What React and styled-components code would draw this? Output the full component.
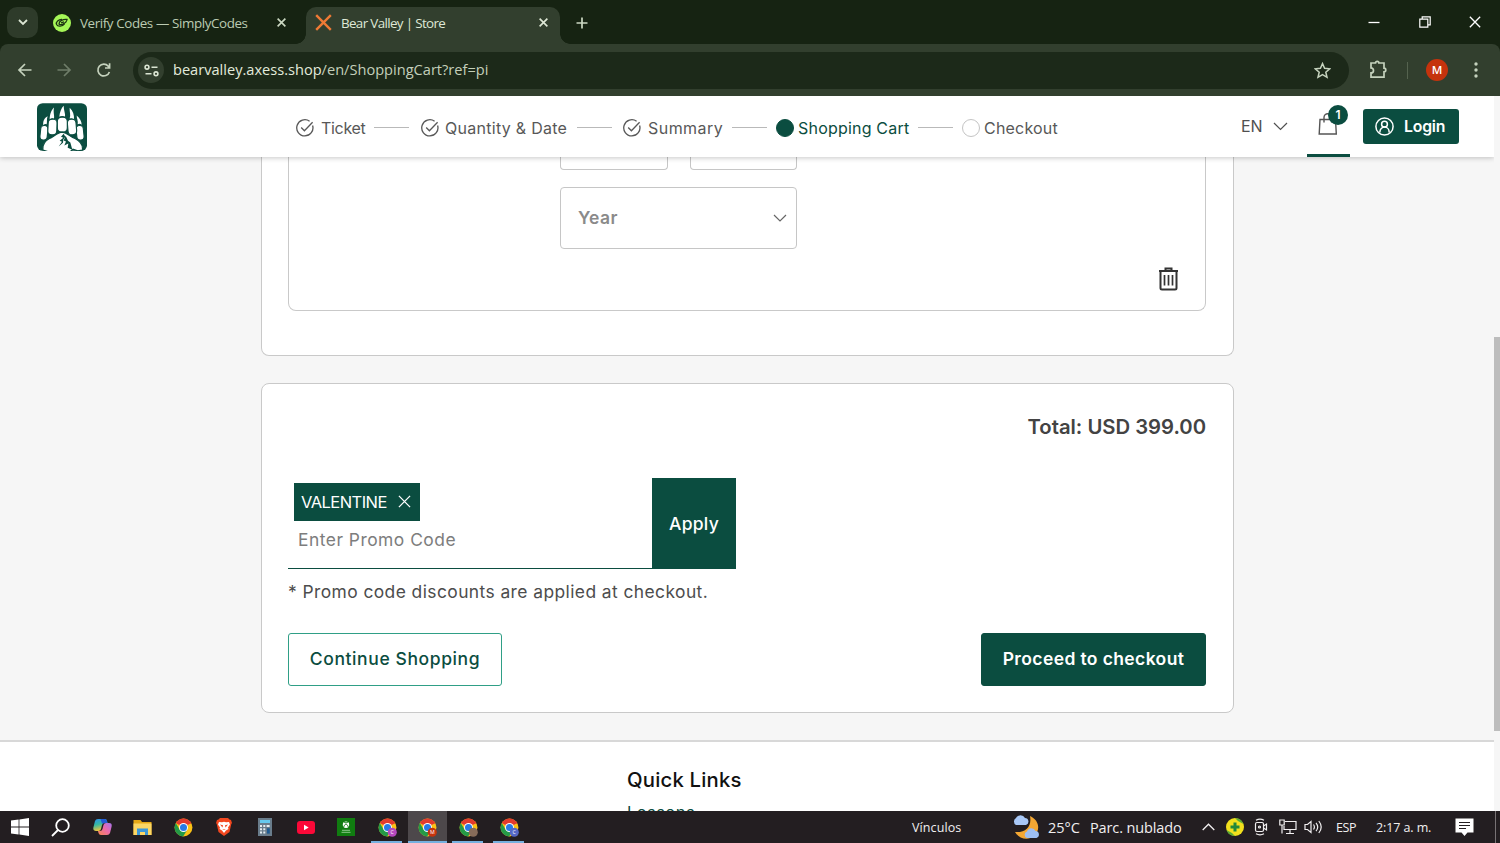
import React from 'react';
import styled, { createGlobalStyle } from 'styled-components';

const GlobalStyle = createGlobalStyle`
  * {
    box-sizing: border-box;
  }
  body {
    margin: 0;
    overflow: hidden;
  }
  svg {
    display: block;
    flex: none;
  }
  button {
    margin: 0;
    padding: 0;
    border: 0;
    font-family: inherit;
  }
`;

const green = '#0b4d40';
const systemFont = "'Open Sans', 'Noto Sans', sans-serif";

const Screen = styled.div`
  width: 1500px;
  height: 843px;
  display: flex;
  flex-direction: column;
  overflow: hidden;
  background: #fff;
  font-family: Inter, 'Liberation Sans', sans-serif;
  white-space: nowrap;
`;

/* ---------- browser ---------- */

const TabStrip = styled.div`
  height: 44px;
  flex: none;
  display: flex;
  align-items: flex-end;
  background: #162312;
  font-family: ${systemFont};
`;

const TabSearch = styled.div`
  width: 31px;
  height: 31px;
  margin: 0 0 6px 7px;
  border-radius: 10px;
  background: #2e3b2a;
  display: flex;
  align-items: center;
  justify-content: center;
`;

const Tab = styled.div`
  width: ${(p) => p.$width}px;
  height: 37px;
  display: flex;
  align-items: center;
  padding: 0 ${(p) => p.$end}px 6px ${(p) => p.$indent}px;
  border-radius: 10px 10px 0 0;
  background: ${(p) => (p.$active ? '#323f2e' : 'transparent')};
  color: ${(p) => (p.$active ? '#dfe8d6' : '#bccbb2')};
`;

const TabTitle = styled.span`
  flex: 1;
  margin-left: 9px;
  font-size: 13.4px;
  letter-spacing: ${(p) => p.$ls}px;
`;

const TabFlare = styled.div`
  width: 10px;
  height: 10px;
  background: radial-gradient(
    circle at ${(p) => (p.$right ? '100%' : '0')} 0,
    transparent 9.5px,
    #323f2e 10px
  );
`;

const NewTab = styled.div`
  margin: 0 auto 15px 6px;
`;

const WindowButtons = styled.div`
  height: 44px;
  display: flex;
  align-items: center;
  gap: 38.5px;
  padding-right: 19px;
`;

const ToolbarWrap = styled.div`
  height: 52px;
  flex: none;
  background: #162312;
`;

const Toolbar = styled.div`
  height: 52px;
  display: flex;
  align-items: center;
  padding-left: 17px;
  background: #323f2e;
  border-radius: 8px 8px 0 0;
  font-family: ${systemFont};
`;

const NavButtons = styled.div`
  width: 116px;
  display: flex;
  gap: 23px;
`;

const Omnibox = styled.div`
  width: 1216px;
  height: 37px;
  display: flex;
  align-items: center;
  padding: 0 18px 0 5px;
  border-radius: 19px;
  background: #1c2919;
`;

const SiteInfo = styled.div`
  width: 26px;
  height: 26px;
  border-radius: 50%;
  background: #323f2e;
  display: flex;
  align-items: center;
  justify-content: center;
`;

const Url = styled.span`
  flex: 1;
  margin-left: 9px;
  padding-bottom: 2px;
  font-size: 14.6px;
  color: #c3cfba;

  b {
    font-weight: 400;
    color: #e3ebdc;
  }
`;

const Divider = styled.i`
  width: 1px;
  height: 17px;
  margin: 0 18px 0 18px;
  background: #55634f;
`;

const Profile = styled.div`
  width: 22px;
  height: 22px;
  margin-right: 25px;
  border-radius: 50%;
  background: #c5330d;
  color: #fff;
  font-size: 11.5px;
  font-weight: 600;
  line-height: 22px;
  text-align: center;
`;

/* ---------- page ---------- */

const Viewport = styled.div`
  height: 715px;
  flex: none;
  display: flex;
`;

const Page = styled.div`
  width: 1494px;
  display: flex;
  flex-direction: column;
  overflow: hidden;
  background: #f6f6f6;
`;

const ScrollTrack = styled.div`
  width: 6px;
  padding-top: 241px;
  background: #f6f6f6;
`;

const ScrollThumb = styled.div`
  height: 394px;
  background: #bdbdbd;
`;

const Header = styled.header`
  position: relative;
  z-index: 1;
  height: 61px;
  flex: none;
  display: flex;
  align-items: center;
  padding-left: 37px;
  background: #fff;
  box-shadow: 0 1px 5px rgba(0, 0, 0, 0.22);
`;

const LogoLink = styled.a`
  width: 259px;
`;

const Steps = styled.div`
  width: 945px;
  display: flex;
  padding-top: 2px;
`;

const Step = styled.div`
  width: ${(p) => p.$width}px;
  display: flex;
  align-items: center;
  padding-right: ${(p) => p.$end}px;
  color: ${(p) => (p.$current ? green : '#585858')};
`;

const StepLabel = styled.span`
  margin-left: ${(p) => p.$gap}px;
  font-size: 16px;
  letter-spacing: ${(p) => p.$ls}px;
`;

const StepLine = styled.i`
  width: 35px;
  height: 1px;
  margin-left: auto;
  background: #b9b9b9;
`;

const StepDot = styled.i`
  width: 18px;
  height: 18px;
  border-radius: 50%;
  border: 1px solid ${(p) => (p.$filled ? green : '#c4c4c4')};
  background: ${(p) => (p.$filled ? green : '#fff')};
`;

const Language = styled.div`
  width: 66px;
  display: flex;
  align-items: center;
  gap: 10px;
  padding-bottom: 1px;
  font-size: 16px;
  color: #505050;
`;

const CartTab = styled.div`
  position: relative;
  width: 43px;
  height: 61px;
  padding: 16px 0 0 11px;
  border-bottom: 3px solid ${green};
`;

const CartBadge = styled.span`
  position: absolute;
  left: 21px;
  top: 9px;
  width: 20px;
  height: 20px;
  border-radius: 50%;
  background: ${green};
  color: #fff;
  font-size: 12px;
  font-weight: 600;
  line-height: 20px;
  text-align: center;
`;

const LoginButton = styled.button`
  width: 96px;
  height: 35px;
  margin-left: 13px;
  padding: 0 0 1px 12px;
  display: flex;
  align-items: center;
  gap: 10px;
  border-radius: 3px;
  background: ${green};
  color: #fff;
  font-size: 15.8px;
  font-weight: 600;
  letter-spacing: -0.2px;
`;

const Content = styled.main`
  height: 583px;
  flex: none;
  width: 973px;
  margin-left: 261px;
`;

const TicketCard = styled.section`
  height: 199px;
  padding: 0 27px 45px 26px;
  border: 1px solid #c9c9c9;
  border-top: 0;
  border-radius: 0 0 8px 8px;
  background: #fff;
`;

const TicketForm = styled.div`
  height: 154px;
  display: flex;
  justify-content: space-between;
  align-items: flex-end;
  padding: 0 26px 19px 271px;
  border: 1px solid #c9c9c9;
  border-top: 0;
  border-radius: 0 0 8px 8px;
`;

const BirthDate = styled.div`
  width: 237px;
  align-self: flex-start;
  display: grid;
  grid-template-columns: 108px 107px;
  column-gap: 22px;
  row-gap: 17px;
`;

const CutSelect = styled.div`
  height: 13px;
  border: 1px solid #c6c6c6;
  border-top: 0;
  border-radius: 0 0 4px 4px;
`;

const Select = styled.div`
  grid-column: span 2;
  height: 62px;
  display: flex;
  align-items: center;
  justify-content: space-between;
  padding: 0 9px 1px 17px;
  border: 1px solid #c6c6c6;
  border-radius: 4px;
  color: #8a8a8a;
  font-size: 17.5px;
  font-weight: 600;
  letter-spacing: 0.35px;
`;

const SummaryCard = styled.section`
  height: 330px;
  margin-top: 27px;
  padding: 28px 27px 0 26px;
  border: 1px solid #c9c9c9;
  border-radius: 8px;
  background: #fff;
`;

const Total = styled.div`
  height: 30px;
  line-height: 30px;
  text-align: right;
  color: #434343;
  font-size: 20.3px;
  font-weight: 600;
  letter-spacing: -0.02px;
`;

const Promo = styled.div`
  width: 448px;
  height: 91px;
  margin-top: 36px;
  display: flex;
`;

const PromoField = styled.div`
  flex: 1;
  padding: 5px 0 0 6px;
  border-bottom: 1px solid ${green};
`;

const PromoTag = styled.div`
  width: 126px;
  height: 38px;
  display: flex;
  align-items: center;
  justify-content: space-between;
  padding: 0 9px 1px 7px;
  background: ${green};
  color: #fff;
  font-size: 16.5px;
  letter-spacing: -0.55px;
`;

const Placeholder = styled.div`
  margin: 7px 0 0 4px;
  color: #7d7d7d;
  font-size: 17.4px;
  line-height: 24px;
  letter-spacing: 0.5px;
`;

const ApplyButton = styled.button`
  width: 84px;
  padding-bottom: 1px;
  background: ${green};
  color: #fff;
  font-size: 17.5px;
  font-weight: 500;
  letter-spacing: 0.3px;
`;

const PromoNote = styled.p`
  margin: 11px 0 0;
  color: #4d4d4d;
  font-size: 17.4px;
  line-height: 24px;
  letter-spacing: 0.43px;
`;

const Actions = styled.div`
  margin-top: 29px;
  display: flex;
  justify-content: space-between;
`;

const ActionButton = styled.button`
  width: ${(p) => p.$width}px;
  height: 53px;
  padding-bottom: 2px;
  border: 1px solid ${(p) => (p.$primary ? green : '#2f9f86')};
  border-radius: 3px;
  background: ${(p) => (p.$primary ? green : '#fff')};
  color: ${(p) => (p.$primary ? '#fff' : green)};
  font-size: 17.5px;
  font-weight: ${(p) => (p.$primary ? 600 : 500)};
  letter-spacing: ${(p) => p.$ls}px;
`;

const Footer = styled.footer`
  height: 73px;
  flex: none;
  padding: 23px 0 0 627px;
  border-top: 2px solid #d8d8d8;
  background: #fff;
`;

const FooterTitle = styled.h3`
  margin: 0;
  color: #111;
  font-size: 20.3px;
  font-weight: 500;
  line-height: 30px;
  letter-spacing: 0.2px;
`;

const FooterLink = styled.div`
  margin-top: 5px;
  color: ${green};
  font-size: 16.5px;
  line-height: 24px;
  letter-spacing: 0.5px;
`;

/* ---------- taskbar ---------- */

const Taskbar = styled.div`
  height: 32px;
  flex: none;
  display: flex;
  background: #231e21;
  color: #f1eff0;
  font-family: ${systemFont};
`;

const Apps = styled.div`
  width: 912px;
  display: flex;
`;

const AppButton = styled.div`
  width: 40.7px;
  height: 32px;
  display: flex;
  align-items: center;
  justify-content: center;
  padding-left: ${(p) => p.$nudge || 0}px;
  background: ${(p) => (p.$active ? '#4d484b' : 'transparent')};
`;

const RunningApp = styled(AppButton)`
  width: ${(p) => (p.$active ? 39 : 31)}px;
  margin: 0 ${(p) => (p.$active ? 0.85 : 4.85)}px;
  border-bottom: 2px solid #76b0df;
  padding: 2px 0 0 1px;
`;

const TrayCell = styled.div`
  width: ${(p) => p.$width}px;
  height: 32px;
  display: flex;
  align-items: center;
  font-size: ${(p) => p.$size || 12.5}px;
  letter-spacing: ${(p) => p.$ls || 0}px;
`;

const DesktopEdge = styled.i`
  width: 5px;
  border-left: 1px solid #777274;
`;

/* ---------- drawings ---------- */

const Stroke = ({ w, h, box, width = 1.5, color = 'currentColor', children }) => (
  <svg
    width={w}
    height={h}
    viewBox={box || `0 0 ${w} ${h}`}
    fill="none"
    stroke={color}
    strokeWidth={width}
  >
    {children}
  </svg>
);

const CloseIcon = ({ size = 9, width = 1.8, color }) => (
  <Stroke w={size} h={size} box="0 0 10 10" width={width} color={color}>
    <path d="M.7.7l8.6 8.6M9.3.7L.7 9.3" />
  </Stroke>
);

const CheckCircle = () => (
  <Stroke w={18} h={18} width={1.3}>
    <path d="M16.6 6.5A8.1 8.1 0 1 1 13.6 2.3" />
    <path d="M5.2 8.5l3.2 3.3 8.2-8.6" />
  </Stroke>
);

const BearLogo = () => (
  <svg width="50" height="48" viewBox="0 0 150 143">
    <rect width="150" height="143" rx="17" fill={green} />
    <g fill="#fff">
      <path d="M19 66C17 54 22 44 32 39C28 49 31 56 29 63Q23 61 19 66Z" />
      <path d="M38 49C38 34 43 20 51 13C48 28 53 37 51 46Q44 43 38 49Z" />
      <path d="M67 41C68 28 73 15 80 8C80 22 86 32 84 41Q76 36 67 41Z" />
      <path d="M98 46C102 36 97 26 98 14C108 23 112 36 111 50Q105 43 98 46Z" />
      <path d="M122 63C124 54 119 46 119 37C128 44 134 54 134 65Q129 59 122 63Z" />
    </g>
    <g fill="#fff" stroke={green} strokeWidth="3.5">
      <rect x="10" y="67" width="22" height="44" rx="11" transform="rotate(6 21 88)" />
      <rect x="118" y="67" width="22" height="44" rx="11" transform="rotate(-6 129 87)" />
      <rect x="33" y="48" width="27" height="47" rx="12" transform="rotate(3 46 71)" />
      <rect x="92" y="48" width="26" height="47" rx="12" transform="rotate(-5 105 71)" />
      <rect x="61" y="42" width="30" height="45" rx="13" />
      <path d="M18 141C16 124 22 115 36 107C51 101 60 88 76 87C92 88 99 101 114 106C129 114 139 124 136 141L122 143L108 138L100 145H32Z" />
    </g>
    <path d="M80 92L72 101L79 104L68 113L75 116L65 130L78 119L79 109L85 101Z" fill={green} />
    <path d="M86 98L80 112L87 115L82 127L94 121L92 134L106 140L100 118L93 113Z" fill={green} />
  </svg>
);

const ChromeIcon = ({ badge, letter }) => (
  <svg width="19" height="19" viewBox="0 0 20 20">
    <circle cx="10" cy="10" r="9.4" fill="#fbc116" />
    <path d="M10 10L1.9 5.2A9.4 9.4 0 0 1 18.1 5.2Z" fill="#e33b2e" />
    <path d="M1.9 5.2A9.4 9.4 0 0 0 9.6 19.4L14 12.3L6 12.3Z" fill="#249a47" />
    <path d="M5 5.2H18.1" stroke="#e33b2e" strokeWidth="1" />
    <circle cx="10" cy="10" r="4.7" fill="#fff" />
    <circle cx="10" cy="10" r="3.7" fill="#287ae6" />
    {badge && <circle cx="15" cy="15" r="4.8" fill={badge} />}
    {letter && (
      <text x="15" y="17" fontSize="5.5" textAnchor="middle" fill="#fff">
        {letter}
      </text>
    )}
  </svg>
);

const steps = [
  { label: 'Ticket', width: 125, end: 12, gap: 7, ls: -0.3, state: 'done' },
  { label: 'Quantity & Date', width: 202, end: 11, gap: 6, ls: 0.28, state: 'done' },
  { label: 'Summary', width: 153, end: 9, gap: 7, ls: 0.45, state: 'done' },
  { label: 'Shopping Cart', width: 186, end: 9, gap: 4, ls: 0.2, state: 'current' },
  { label: 'Checkout', width: 100, end: 0, gap: 4, ls: 0.2, state: 'todo' },
];

const BrowserChrome = () => (
  <>
    <TabStrip>
      <TabSearch>
        <Stroke w={10} h={7} width={1.8} color="#dce6d4">
          <path d="M1 1l4 4 4-4" />
        </Stroke>
      </TabSearch>
      <Tab $width={258} $indent={15} $end={10}>
        <svg width="18" height="18" viewBox="0 0 18 18">
          <circle cx="9" cy="9" r="9" fill="#a5f657" />
          <g fill="none" stroke="#1d3312" strokeWidth="1.3">
            <path d="M9 5.5C5.5 5.4 2.6 8 3.6 10.5C4.7 13 9.5 12.6 11.5 9.8" />
            <path d="M6 10C6 7 10 4.8 14.5 5.5C13 6 14.4 7.6 11.4 9.2C9.4 10.6 7 11 6 10Z" />
            <path d="M8 8.8l3-1" />
          </g>
        </svg>
        <TabTitle $ls={-0.4}>Verify Codes — SimplyCodes</TabTitle>
        <CloseIcon color="#cbd8c2" />
      </Tab>
      <TabFlare />
      <Tab $active $width={254} $indent={9} $end={12.5}>
        <CloseIcon size={17} width={1.4} color="#ef7a35" />
        <TabTitle $ls={-0.65}>Bear Valley | Store</TabTitle>
        <CloseIcon />
      </Tab>
      <TabFlare $right />
      <NewTab>
        <Stroke w={12} h={12} width={1.7} color="#cbd8c2">
          <path d="M6 .5v11M.5 6h11" />
        </Stroke>
      </NewTab>
      <WindowButtons>
        <Stroke w={12} h={12} width={1.3} color="#fff">
          <path d="M.5 6.5h11" />
        </Stroke>
        <Stroke w={12} h={12} width={1.2} color="#fff">
          <path d="M.8 3.2h8v8h-8zM3.2 3V.8h8v8H9" />
        </Stroke>
        <CloseIcon size={12} width={1.1} color="#fff" />
      </WindowButtons>
    </TabStrip>
    <ToolbarWrap>
      <Toolbar>
        <NavButtons>
          <Stroke w={16} h={16} width={1.7} color="#c5d2bd">
            <path d="M14.5 8H2M8 2L2 8l6 6" />
          </Stroke>
          <Stroke w={16} h={16} width={1.7} color="#6f7d69">
            <path d="M1.5 8H14M8 2l6 6-6 6" />
          </Stroke>
          <Stroke w={16} h={16} width={1.7} color="#c5d2bd">
            <path d="M14.4 10A5.9 5.9 0 1 1 13.3 4.2L14.6 6M14.600 1.300V6H10" />
          </Stroke>
        </NavButtons>
        <Omnibox>
          <SiteInfo>
            <Stroke w={15} h={13} width={1.6} color="#dbe5d3">
              <circle cx="3" cy="3.2" r="1.9" />
              <path d="M7.5 3.2h6M1.5 9.8h6" />
              <circle cx="12" cy="9.8" r="1.9" />
            </Stroke>
          </SiteInfo>
          <Url>
            <b>bearvalley.axess.shop</b>/en/ShoppingCart?ref=pi
          </Url>
          <Stroke w={17} h={17} width={1.5} color="#c5d2bd">
            <path d="M8.5 1.6l2.1 4.7 5.1.5-3.9 3.4 1.2 5.1-4.5-2.7-4.5 2.7 1.2-5.1L1.3 6.8l5.1-.5z" />
          </Stroke>
        </Omnibox>
        <Stroke w={40} h={20} width={1.7} color="#c5d2bd">
          <path d="M22.500 3H26.500a1.700 1.700 0 0 1 3.400 0H35v5.200a1.800 1.800 0 0 1 0 3.600V17.200H22v-4.300a2.500 2.500 0 0 0 0-5V3z" />
        </Stroke>
        <Divider />
        <Profile>M</Profile>
        <svg width="6" height="16" viewBox="0 0 6 16" fill="#c5d2bd">
          <circle cx="3" cy="2" r="1.7" />
          <circle cx="3" cy="8" r="1.7" />
          <circle cx="3" cy="14" r="1.7" />
        </svg>
      </Toolbar>
    </ToolbarWrap>
  </>
);

const SiteHeader = () => (
  <Header>
    <LogoLink>
      <BearLogo />
    </LogoLink>
    <Steps>
      {steps.map((step, i) => (
        <Step
          key={step.label}
          $width={step.width}
          $end={step.end}
          $current={step.state === 'current'}
        >
          {step.state === 'done' ? <CheckCircle /> : <StepDot $filled={step.state === 'current'} />}
          <StepLabel $gap={step.gap} $ls={step.ls}>
            {step.label}
          </StepLabel>
          {i < steps.length - 1 && <StepLine />}
        </Step>
      ))}
    </Steps>
    <Language>
      EN
      <Stroke w={15} h={9} width={1.2}>
        <path d="M1 1l6.5 6.5L14 1" />
      </Stroke>
    </Language>
    <CartTab>
      <Stroke w={20} h={24} width={1.4} color="#555">
        <path d="M2 7.5h15.5l.8 14.5H1.2z" />
        <path d="M6 10.5V5.500a3.8 3.8 0 0 1 7.6 0v5" />
      </Stroke>
      <CartBadge>1</CartBadge>
    </CartTab>
    <LoginButton>
      <Stroke w={19} h={19} width={1.5}>
        <circle cx="9.5" cy="9.5" r="8.6" />
        <circle cx="9.5" cy="7.2" r="2.9" />
        <path d="M4.9 15.5v-.8a4.6 4.6 0 0 1 9.2 0v.8" />
      </Stroke>
      Login
    </LoginButton>
  </Header>
);

const Tray = () => (
  <>
    <TrayCell $width={100} $ls={0.1}>Vínculos</TrayCell>
    <TrayCell $width={36}>
      <svg width="28" height="26" viewBox="0 0 28 26">
        <path d="M18 2C27 6 29 16 22 22C16 27 7 25 3 18C14 19 20 12 18 2Z" fill="#f4a733" />
        <path d="M4 11a4 4 0 0 1 0-7a5 5 0 0 1 9 0a3.6 3.6 0 0 1 1 7z" fill="#a9c8f6" />
        <path d="M15 24a3.4 3.4 0 0 1 0-6.5a4.5 4.5 0 0 1 8.500-.5a3.6 3.6 0 0 1 1 7z" fill="#9dbef2" />
      </svg>
    </TrayCell>
    <TrayCell $width={42} $size={14.5} $ls={0}>25°C</TrayCell>
    <TrayCell $width={112} $size={14.5} $ls={-0.12}>Parc. nublado</TrayCell>
    <TrayCell $width={24}>
      <Stroke w={13} h={8} width={1.3}>
        <path d="M.7 7l5.8-5.8L12.3 7" />
      </Stroke>
    </TrayCell>
    <TrayCell $width={28}>
      <svg width="18" height="18" viewBox="0 0 18 18">
        <circle cx="9" cy="9" r="9" fill="#f2e01d" />
        <path d="M9 0a9 9 0 0 1 8.5 6L12 3zM9 18a9 9 0 0 1-8.5-6L6 15z" fill="#5cab35" />
        <path d="M9 4.500v9M4.500 9h9" stroke="#23883a" strokeWidth="3" />
      </svg>
    </TrayCell>
    <TrayCell $width={25}>
      <Stroke w={14} h={18} width={1.2}>
        <rect x="1.5" y="4.5" width="8" height="9" rx="1.5" />
        <path d="M9.5 8l3-2v6l-3-2M2 2.2Q6 .2 10 2.2M2 15.8q4 2 8 0" />
        <circle cx="5.5" cy="9" r="1" />
      </Stroke>
    </TrayCell>
    <TrayCell $width={25}>
      <Stroke w={18} h={16} width={1.2}>
        <path d="M6 2.5h11v8H5V7M.8 1h4.4v5H.8zM3 6v8.5M11 10.5v4M7 14.5h8" />
      </Stroke>
    </TrayCell>
    <TrayCell $width={32}>
      <Stroke w={19} h={16} width={1.2}>
        <path d="M1 5.5h2.5L7 2.5v11l-3.5-3H1zM9.5 5.5q1.8 2.5 0 5M12 3.8q3.4 4.2 0 8.4M14.8 2q4.8 6 0 12" />
      </Stroke>
    </TrayCell>
    <TrayCell $width={40} $ls={-0.4}>ESP</TrayCell>
    <TrayCell $width={79} $ls={-0.1}>2:17 a. m.</TrayCell>
    <TrayCell $width={40}>
      <svg width="19" height="18" viewBox="0 0 19 18">
        <path d="M.5.5h18v14h-6L9.500 18l-3-3.500h-6z" fill="#fff" />
        <path d="M4 4.500h11M4 7.500h11M4 10.500h7" stroke="#231e21" strokeWidth="1" />
      </svg>
    </TrayCell>
    <DesktopEdge />
  </>
);

const TaskbarApps = () => (
  <Apps>
    <AppButton>
      <svg width="18" height="18" viewBox="0 0 18 18" fill="#fff">
        <path d="M0 2.5l7.6-1v7H0zM8.4 1.4L18 0v8.5H8.4zM0 9.4h7.6v7L0 15.400zM8.400 9.400H18V18l-9.600-1.400z" />
      </svg>
    </AppButton>
    <AppButton $nudge={-1}>
      <Stroke w={21} h={19} width={1.8} color="#fff">
        <circle cx="11.5" cy="7.5" r="6.3" />
        <path d="M7 12l-6 6" />
      </Stroke>
    </AppButton>
    <AppButton $nudge={1.5}>
      <svg width="19" height="18" viewBox="0 0 19 18">
        <defs>
          <linearGradient id="copilotA" x1="0" y1="0" x2=".3" y2="1">
            <stop offset="0" stopColor="#2b8fee" />
            <stop offset=".5" stopColor="#36b9a2" />
            <stop offset="1" stopColor="#f3c53b" />
          </linearGradient>
          <linearGradient id="copilotB" x1="1" y1="0" x2="0" y2="1">
            <stop offset="0" stopColor="#a674ee" />
            <stop offset=".5" stopColor="#ee6aa6" />
            <stop offset="1" stopColor="#f4884c" />
          </linearGradient>
        </defs>
        <path d="M5 1h7q1.5 0 2 2l.5 2h-3q-2 0-2.5 2l-1 4q-.5 2-2.5 2H3Q-.5 13 .5 9l1.5-6q.7-2 3-2z" fill="url(#copilotA)" />
        <path d="M14 17H8q-2 0-2.5-2L5 13h2q2 0 2.5-2l1-4q.5-2 2.5-2h3q3.5 0 2.5 4L17 15q-.7 2-3 2z" fill="url(#copilotB)" />
        <path d="M7.5 1H12q1.5 0 2 2l.5 2h-3q-2 0-2.3 1z" fill="#245bd5" />
      </svg>
    </AppButton>
    <AppButton $nudge={1}>
      <svg width="19" height="17" viewBox="0 0 19 17">
        <path d="M.5 1h7l1.500 2h9.500v13H.5z" fill="#e7a916" />
        <path d="M.5 4.500h18V16H.5z" fill="#fcd765" />
        <path d="M4 16V9.500h11V16h-3v-3H7v3z" fill="#3d98d8" />
      </svg>
    </AppButton>
    <AppButton $nudge={1}>
      <ChromeIcon />
    </AppButton>
    <AppButton $nudge={1}>
      <svg width="16" height="18" viewBox="0 0 16 18">
        <path d="M4 0h8l1.5 1.5L15 2l1 3-.7 1-1.8 8L8 18l-5.5-4L.7 6 0 5l1-3 1.5-.5z" fill="#f2471f" />
        <path d="M3 4l3 .3 2-.6 2 .6 3-.3 1 2.5-2 3 .5 1.5L10 12.5 8 15l-2-2.500L3.500 11 4 9.500 2 6.500z" fill="#fff" />
        <path d="M4 6.500l3 .8-.5 2.200zM12 6.500l-3 .8.5 2.200zM6.200 11.200L8 12l1.800-.8" fill="#f2471f" />
      </svg>
    </AppButton>
    <AppButton $nudge={1}>
      <svg width="14" height="18" viewBox="0 0 14 18">
        <rect width="14" height="18" fill="#697c8b" />
        <rect x="2" y="2" width="10" height="3" fill="#66c9ee" />
        <g fill="#e5edf1">
          <path d="M2 7h2v2H2zM5.3 7h2v2h-2zM8.6 7h3v2h-3zM2 10.3h2v2H2zM5.3 10.3h2v2h-2zM2 13.6h2v2H2zM5.3 13.6h2v2h-2z" />
        </g>
        <path d="M9 10.3h2.8v5.3H9z" fill="#1d5a91" />
      </svg>
    </AppButton>
    <AppButton $nudge={1}>
      <svg width="18" height="13" viewBox="0 0 18 13">
        <rect width="18" height="13" rx="3" fill="#fb0938" />
        <path d="M7 3.8v5.4l4.7-2.700z" fill="#fff" />
      </svg>
    </AppButton>
    <AppButton $nudge={1}>
      <svg width="18" height="18" viewBox="0 0 18 18">
        <rect width="18" height="18" fill="#107c10" />
        <circle cx="9" cy="6.7" r="3.2" fill="#fff" />
        <path d="M6.5 9.5Q7 7 9 5.8Q11 7 11.5 9.5M7 4.2q1.2 0 2 .8q.8-.8 2-.8" fill="none" stroke="#107c10" strokeWidth=".9" />
        <path d="M5 12.3h8M4.5 14.3h9" stroke="#8bc58b" strokeWidth="1" />
      </svg>
    </AppButton>
    <RunningApp>
      <ChromeIcon badge="#b548bd" letter="C" />
    </RunningApp>
    <RunningApp $active>
      <ChromeIcon badge="#c5330d" letter="M" />
    </RunningApp>
    <RunningApp>
      <ChromeIcon badge="#866b59" />
    </RunningApp>
    <RunningApp>
      <ChromeIcon badge="#5567c5" letter="C" />
    </RunningApp>
  </Apps>
);

const App = () => {
  return (
    <Screen>
      <GlobalStyle />
      <BrowserChrome />
      <Viewport>
        <Page>
          <SiteHeader />
          <Content>
            <TicketCard>
              <TicketForm>
                <BirthDate>
                  <CutSelect />
                  <CutSelect />
                  <Select>
                    Year
                    <Stroke w={14} h={8} width={1.2} color="#666">
                      <path d="M1 1l6 6 6-6" />
                    </Stroke>
                  </Select>
                </BirthDate>
                <Stroke w={21} h={24} width={2} color="#333">
                  <path d="M1 4h19M7.5 3.5V1.5h6v2" />
                  <path d="M2.5 4.5V21q0 1.5 1.5 1.5h13q1.5 0 1.5-1.5V4.5" />
                  <path d="M6.5 8v10.5M10.5 8v10.5M14.5 8v10.5" strokeWidth="1.7" />
                </Stroke>
              </TicketForm>
            </TicketCard>
            <SummaryCard>
              <Total>Total: USD 399.00</Total>
              <Promo>
                <PromoField>
                  <PromoTag>
                    VALENTINE
                    <CloseIcon size={13} width={1} />
                  </PromoTag>
                  <Placeholder>Enter Promo Code</Placeholder>
                </PromoField>
                <ApplyButton>Apply</ApplyButton>
              </Promo>
              <PromoNote>* Promo code discounts are applied at checkout.</PromoNote>
              <Actions>
                <ActionButton $width={214} $ls={0.6}>
                  Continue Shopping
                </ActionButton>
                <ActionButton $primary $width={225} $ls={0.38}>
                  Proceed to checkout
                </ActionButton>
              </Actions>
            </SummaryCard>
          </Content>
          <Footer>
            <FooterTitle>Quick Links</FooterTitle>
            <FooterLink>Lessons</FooterLink>
          </Footer>
        </Page>
        <ScrollTrack>
          <ScrollThumb />
        </ScrollTrack>
      </Viewport>
      <Taskbar>
        <TaskbarApps />
        <Tray />
      </Taskbar>
    </Screen>
  );
};

export default App;
